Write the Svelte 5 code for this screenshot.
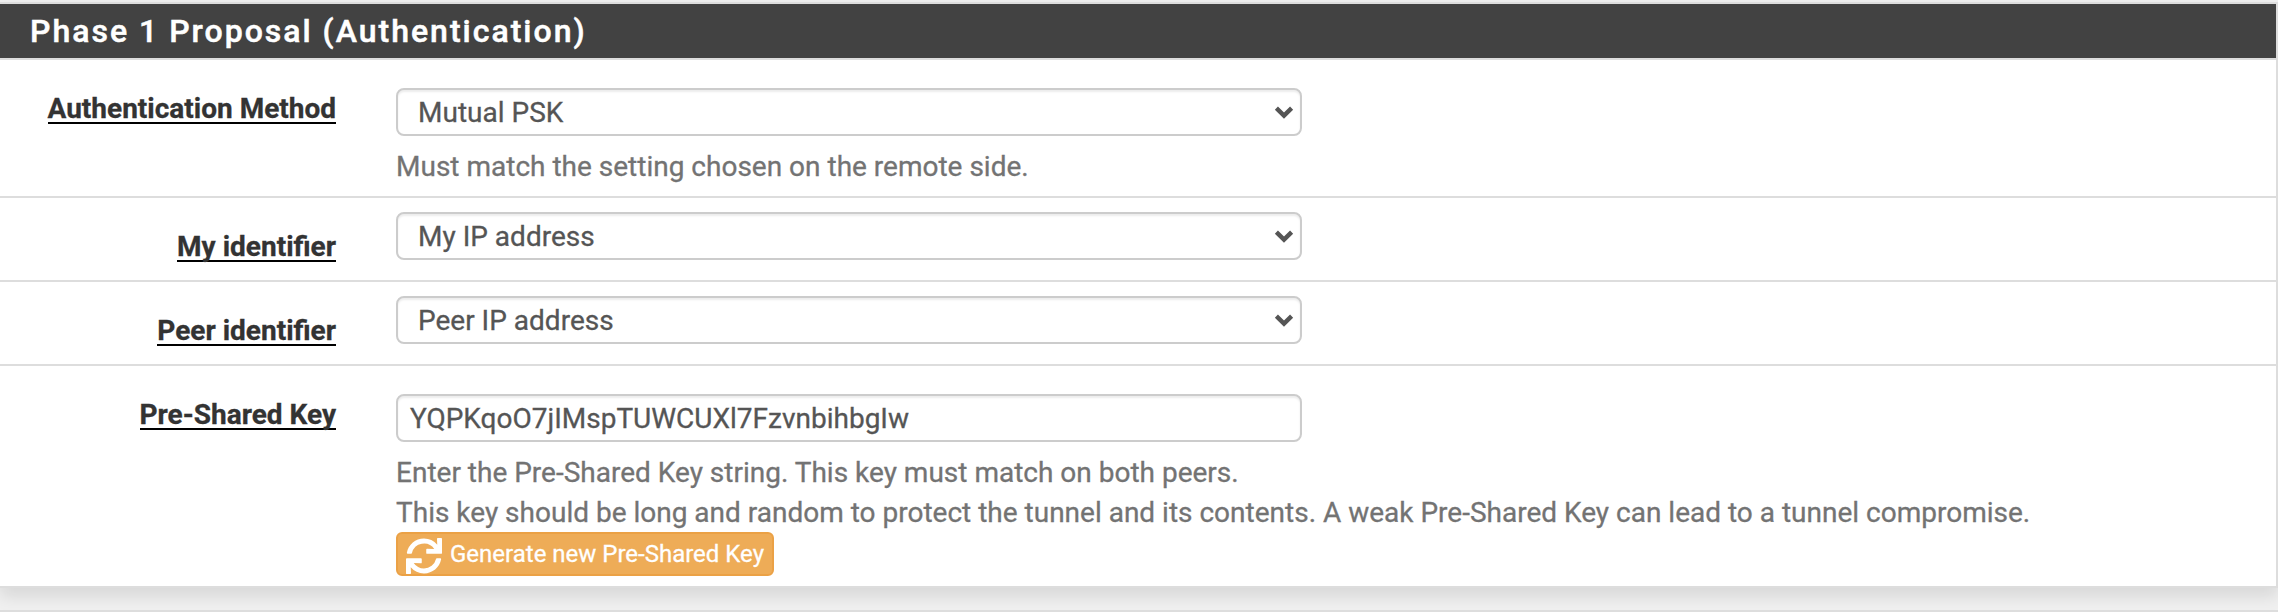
<script>
  const rows = [
    { label: 'Authentication Method', kind: 'select', value: 'Mutual PSK', help: ['Must match the setting chosen on the remote side.'], cls: 'method' },
    { label: 'My identifier', kind: 'select', value: 'My IP address', help: [], cls: 'ident' },
    { label: 'Peer identifier', kind: 'select', value: 'Peer IP address', help: [], cls: 'ident' },
    {
      label: 'Pre-Shared Key',
      kind: 'input',
      value: 'YQPKqoO7jIMspTUWCUXl7FzvnbihbgIw',
      help: [
        'Enter the Pre-Shared Key string. This key must match on both peers.',
        'This key should be long and random to protect the tunnel and its contents. A weak Pre-Shared Key can lead to a tunnel compromise.'
      ],
      action: 'Generate new Pre-Shared Key',
      cls: 'key'
    }
  ];
</script>

<main>
  <section class="panel">
    <h2>Phase 1 Proposal (Authentication)</h2>
    {#each rows as row}
      <div class="row {row.cls}">
        <div class="label"><span>{row.label}</span></div>
        <div class="field">
          <div class="control {row.kind}">
            <span>{row.value}</span>
            {#if row.kind === 'select'}
              <svg width="20" height="14" viewBox="0 0 20 14"><path d="M2.4 3.1 10 10.6 17.6 3.1" fill="none" stroke="#555" stroke-width="4.4" /></svg>
            {/if}
          </div>
          {#if row.help.length}
            <div class="help">
              {#each row.help as line}<p>{line}</p>{/each}
            </div>
          {/if}
          {#if row.action}
            <button type="button">
              <svg width="36" height="36" viewBox="0 0 512 512"><path fill="#fff" d="M440.65 12.57l4 82.77A247.16 247.16 0 0 0 255.83 8C134.73 8 33.91 94.92 12.29 209.82A12 12 0 0 0 24.09 224h49.05a12 12 0 0 0 11.67-9.26 175.91 175.91 0 0 1 317-56.94l-101.46-4.86a12 12 0 0 0-12.57 12v47.41a12 12 0 0 0 12 12H500a12 12 0 0 0 12-12V12a12 12 0 0 0-12-12h-47.37a12 12 0 0 0-11.98 12.57zM255.83 432a175.61 175.61 0 0 1-146-77.8l101.8 4.87a12 12 0 0 0 12.57-12v-47.4a12 12 0 0 0-12-12H12a12 12 0 0 0-12 12V500a12 12 0 0 0 12 12h47.35a12 12 0 0 0 12-12.6l-4.15-82.57A247.17 247.17 0 0 0 255.83 504c121.11 0 221.93-86.92 243.55-201.82a12 12 0 0 0-11.8-14.18h-49.05a12 12 0 0 0-11.67 9.26A175.86 175.86 0 0 1 255.83 432z" /></svg>
              <span>{row.action}</span>
            </button>
          {/if}
        </div>
      </div>
    {/each}
  </section>
  <div class="next"></div>
</main>

<style>
  :global(body) { background: #f0f0f0; }
  main {
    box-sizing: border-box;
    height: 612px;
    padding-top: 2px;
    overflow: hidden;
    font: 28px/40px Roboto, sans-serif;
    color: #333;
    -webkit-text-stroke: 0.3px currentColor;
  }
  .panel {
    box-sizing: border-box;
    height: 586px;
    border: solid #ddd;
    border-width: 2px 2px 2px 0;
    background: #fff;
    box-shadow: 0 8px 16px rgba(0, 0, 0, 0.11);
  }
  h2 {
    box-sizing: border-box;
    height: 56px;
    margin: 0;
    padding-left: 30px;
    border-bottom: 2px solid #ddd;
    background: #424242;
    color: #fff;
    font-size: 32px;
    font-weight: 500;
    line-height: 54px;
    letter-spacing: 2px;
    -webkit-text-stroke-width: 0.5px;
  }
  .row {
    display: flex;
    gap: 60px;
    box-sizing: border-box;
    border-bottom: 2px solid #ddd;
  }
  .method { height: 138px; padding-top: 28px; }
  .ident { height: 84px; padding-top: 14px; }
  .key { height: 220px; padding-top: 28px; border-bottom: 0; }
  .label {
    width: 336px;
    text-align: right;
    font-weight: 700;
  }
  .label span {
    display: inline-block;
    height: 34px;
    line-height: 42px;
    border-bottom: 2px solid #000;
  }
  .ident .label { padding-top: 14px; }
  .control {
    display: flex;
    align-items: center;
    justify-content: space-between;
    box-sizing: border-box;
    width: 906px;
    height: 48px;
    padding: 0 6px 0 20px;
    border: 2px solid #ccc;
    border-radius: 8px;
    color: #555;
    box-shadow: inset 0 2px 2px rgba(0, 0, 0, 0.075);
  }
  .control span { padding-top: 2px; }
  .input { padding-left: 12px; }
  .help {
    padding-top: 10px;
    color: #737373;
    white-space: nowrap;
  }
  p { height: 40px; margin: 0; line-height: 42px; }
  button {
    display: flex;
    align-items: center;
    gap: 8px;
    box-sizing: border-box;
    width: 378px;
    height: 44px;
    padding: 0 8px;
    border: 2px solid #eba145;
    border-radius: 6px;
    background: #eeac57;
    color: #fff;
    font: 24px/36px Roboto, sans-serif;
    white-space: nowrap;
  }
  button svg { margin-top: 4px; flex: none; }
  .next { height: 2px; margin-top: 22px; background: #ddd; }
</style>
